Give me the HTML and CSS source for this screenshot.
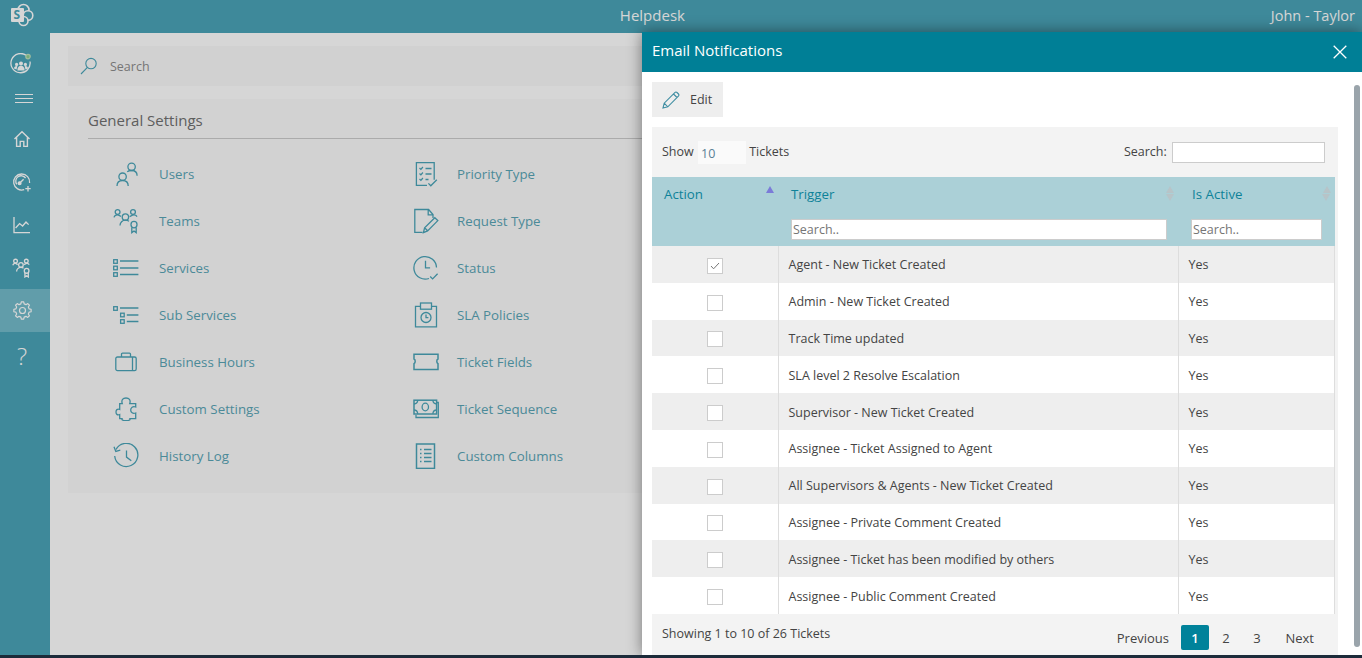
FILE: index.html
```html
<!DOCTYPE html>
<html>
<head>
<title>Helpdesk</title>
<link rel="stylesheet" href="styles.css">
</head>
<body>
  <div id="app">
    <div id="topbar">
      <div class="logo">
        <svg width="24" height="24" viewBox="0 0 24 24">
          <circle cx="13.5" cy="7" r="5.5" fill="none" stroke="#fff" stroke-width="1.6"/>
          <circle cx="18" cy="12.5" r="4.8" fill="#4ba4b8" stroke="#fff" stroke-width="1.6"/>
          <circle cx="13.5" cy="18" r="4.5" fill="#4ba4b8" stroke="#fff" stroke-width="1.6"/>
          <rect x="1" y="5" width="13" height="14" rx="1" fill="#fff"/>
          <text x="3.6" y="16.4" class="logo-letter">S</text>
        </svg>
      </div>
      <div class="app-title">Helpdesk</div>
      <div class="user-name">John - Taylor</div>
    </div>

    <div id="layout">
      <div id="sidebar">
        <div class="nav-item nav-profile">
          <svg width="24" height="24" viewBox="0 0 24 24" fill="none" stroke="#fff" stroke-width="1.3">
            <path d="M17.5 2.6A9.6 9.6 0 1 0 21 8.5"/>
            <circle cx="19" cy="3.6" r="2.2" fill="#8fd08f" stroke="#bde0bd"/>
            <circle cx="12" cy="10.4" r="2" fill="#fff" stroke="none"/>
            <circle cx="7.6" cy="11.4" r="1.6" fill="#fff" stroke="none"/>
            <circle cx="16.4" cy="11.4" r="1.6" fill="#fff" stroke="none"/>
            <path d="M8.4 17.4c0-3 1.4-4.6 3.6-4.6s3.6 1.6 3.6 4.6z" fill="#fff" stroke="none"/>
            <path d="M5 15.6c0-1.6 1-2.6 2.6-2.6l.8.2-.9 3.4zM19 15.6c0-1.6-1-2.6-2.6-2.6l-.8.2.9 3.4z" fill="#fff" stroke="none"/>
          </svg>
        </div>
        <div class="nav-item nav-menu">
          <svg width="18" height="11" viewBox="0 0 18 11" stroke="#fff" stroke-width="1">
            <path d="M0 1.5h18M0 5.5h18M0 9.5h18"/>
          </svg>
        </div>
        <div class="nav-item nav-home">
          <svg width="18" height="18" viewBox="0 0 18 18" fill="none" stroke="#fff" stroke-width="1.4">
            <path d="M1.5 9 9 1.8 16.5 9M3.6 7.4v9h3.6v-5h3.6v5h3.6v-9"/>
          </svg>
        </div>
        <div class="nav-item">
          <svg width="20" height="20" viewBox="0 0 20 20" fill="none" stroke="#fff" stroke-width="1.3">
            <path d="M12.2 17.6A8 8 0 1 1 17.6 11"/>
            <path d="M4.8 12.4A5.4 5.4 0 0 1 13.6 6"/>
            <path d="M6.8 12 11.6 7.2"/>
            <circle cx="7.6" cy="11.2" r="1.4" fill="#fff"/>
            <path d="M16 14v5.4M13.3 16.7h5.4"/>
          </svg>
        </div>
        <div class="nav-item">
          <svg width="18" height="18" viewBox="0 0 18 18" fill="none" stroke="#fff" stroke-width="1.3">
            <path d="M1 1v15.6h16"/>
            <path d="M2.6 12 6.6 7.6 9.6 10 13 6l2.6 2.6"/>
          </svg>
        </div>
        <div class="nav-item">
          <svg width="20" height="20" viewBox="0 0 26 26" fill="none" stroke="#fff" stroke-width="1.7">
            <circle cx="4.6" cy="4" r="2.4"/><circle cx="18.6" cy="4" r="2.4"/><circle cx="11.6" cy="9" r="3"/>
            <path d="M1 9.4c.6-2 2-2.600 4-2.400l2.400 1.600M22.400 8.600c-.6-1.200-2-1.800-3.800-1.600l-3 1.600M6 17.600c0-3 2.400-5.400 5.600-5.400 1.400 0 2.600.4 3.400 1"/>
            <rect x="16" y="13.4" width="6" height="6.4" rx="3"/>
            <path d="M16.8 19.6v5l2.200-1.600 2.200 1.600v-5"/>
          </svg>
        </div>
        <div class="nav-item active">
          <svg width="19" height="19" viewBox="-12 -12 24 24" fill="none" stroke="#fff" stroke-width="1.5" stroke-linejoin="round">
            <circle r="3.8"/>
            <polygon points="8.34,-2.08 10.89,-1.53 10.89,1.53 8.34,2.08 7.37,4.43 8.78,6.62 6.62,8.78 4.43,7.37 2.08,8.34 1.53,10.89 -1.53,10.89 -2.08,8.34 -4.43,7.37 -6.62,8.78 -8.78,6.62 -7.37,4.43 -8.34,2.08 -10.89,1.53 -10.89,-1.53 -8.34,-2.08 -7.37,-4.43 -8.78,-6.62 -6.62,-8.78 -4.43,-7.37 -2.08,-8.34 -1.53,-10.89 1.53,-10.89 2.08,-8.34 4.43,-7.37 6.62,-8.78 8.78,-6.62 7.37,-4.43"/>
          </svg>
        </div>
        <div class="nav-item nav-help">?</div>
      </div>

      <div id="content">
        <div class="search-bar">
          <svg width="18" height="18" viewBox="0 0 18 18" fill="none" stroke="#4ba4b8" stroke-width="1.1">
            <circle cx="11" cy="6.6" r="5.2"/>
            <path d="M7.4 10.4 1 17"/>
          </svg>
          <span>Search</span>
        </div>

        <div class="settings-card">
          <h2>General Settings</h2>
          <div class="settings-grid">
            <a class="setting">
              <svg class="setting-icon" width="24" height="24" viewBox="0 0 24 24">
                <circle cx="17.6" cy="4.8" r="3.7"/><circle cx="8.6" cy="14.7" r="3.7"/>
                <path d="M3 24c0-3.6 2.200-5.500 5.600-5.500s5.600 1.900 5.600 5.500M13.200 9.800c1.200-.9 2.700-1.300 4.400-1.300 3.400 0 5.500 1.900 5.500 5.300"/>
              </svg>
              <span>Users</span>
            </a>
            <a class="setting">
              <svg class="setting-icon" width="26" height="26" viewBox="0 0 26 26">
                <circle cx="4.6" cy="4" r="2.4"/><circle cx="20" cy="4" r="2.4"/><circle cx="12.4" cy="9" r="3.2"/>
                <path d="M1 9.4c.6-2 2-2.600 4-2.400l3 1.400M24 8.600c-.6-1.200-2-1.800-4-1.600l-3.400 1.600M7 17.600c0-3 2.400-5.400 5.400-5.400 1.400 0 2.600.4 3.600 1"/>
                <rect x="18" y="13.4" width="6" height="6.4" rx="3"/>
                <path d="M18.800 19.600v5l2.200-1.600 2.200 1.600v-5"/>
              </svg>
              <span>Teams</span>
            </a>
            <a class="setting">
              <svg class="setting-icon" width="26" height="18" viewBox="0 0 26 18">
                <rect x=".7" y=".7" width="3.6" height="3.6"/><rect x=".7" y="7.2" width="3.6" height="3.6"/><rect x=".7" y="13.7" width="3.6" height="3.6"/>
                <path d="M7 2h18.400M7 9h18.400M7 15.500h18.400" stroke-width="1.5"/>
              </svg>
              <span>Services</span>
            </a>
            <a class="setting">
              <svg class="setting-icon" width="26" height="18" viewBox="0 0 26 18">
                <rect x=".7" y=".7" width="3.6" height="3.6"/><rect x="7.6" y="7.2" width="3.6" height="3.6"/><rect x="7.6" y="13.7" width="3.6" height="3.6"/>
                <path d="M7 2h18.400M13.800 9h11.600M13.800 15.500h11.600" stroke-width="1.5"/>
              </svg>
              <span>Sub Services</span>
            </a>
            <a class="setting">
              <svg class="setting-icon" width="24" height="20" viewBox="0 0 24 20">
                <rect x="1.8" y="5" width="20.4" height="13.6" rx="1.6"/>
                <path d="M7.500 5V2.200c0-.6.400-1 1-1h7c.6 0 1 .4 1 1V5M18.500 5v13.600"/>
              </svg>
              <span>Business Hours</span>
            </a>
            <a class="setting">
              <svg class="setting-icon" width="22" height="24" viewBox="0 0 22 24">
                <path d="M7.300 6.700C6 3 8 1 11 1s5 2 3.700 5.700h6V10c-3-1-5 .5-5 3s2 4 5 3v5.700H15c.5 1.500-1.500 2-4 2s-4.500-.5-4-2H4.700v-4.200c-2.500 1-3.700-.5-3.700-2.500s1.200-3.500 3.700-2.500V6.700z"/>
              </svg>
              <span>Custom Settings</span>
            </a>
            <a class="setting">
              <svg class="setting-icon" width="26" height="26" viewBox="0 0 26 26">
                <path d="M3 6.500A11.600 11.600 0 1 1 1.700 13"/>
                <path d="M1 3.800 2.800 8.400 7.300 7.200M13.500 7.500v6.600l4.800 3.600"/>
              </svg>
              <span>History Log</span>
            </a>
            <a class="setting">
              <svg class="setting-icon" width="24" height="26" viewBox="0 0 24 26">
                <path d="M13 24.400H2.400V1.700h17.800v17"/>
                <path d="M5.500 7l1.400 1.400 2-2.400M5.500 12.500l1.400 1.400 2-2.400M5.500 18l1.400 1.400 2-2.400M11.500 7.500h6M11.500 13h6M11.500 18.500h3M14.400 22.400l2.400 2.400 6-6"/>
              </svg>
              <span>Priority Type</span>
            </a>
            <a class="setting">
              <svg class="setting-icon" width="26" height="26" viewBox="0 0 26 26">
                <path d="M9.600 24.400H1.800V1.500h13.800l4.400 5v3.600M15.200 1.500v5.400h4.800"/>
                <path d="M10.400 24.600l1.200-4.800L21.800 9.700l3 2.900-10.200 10.300zM11.600 19.800l3 3"/>
              </svg>
              <span>Request Type</span>
            </a>
            <a class="setting">
              <svg class="setting-icon" width="26" height="26" viewBox="0 0 26 26">
                <path d="M16 23.500A11.300 11.300 0 1 1 23.500 12.500M12.500 5.800v7h4.600M17.200 21.500l2.400 2.400 5-5.200"/>
              </svg>
              <span>Status</span>
            </a>
            <a class="setting">
              <svg class="setting-icon" width="24" height="26" viewBox="0 0 24 26">
                <path d="M6.500 4.400H1.500v20.500h21V4.400h-5"/>
                <rect x="6.5" y="1" width="11" height="6.2"/>
                <circle cx="12" cy="15.500" r="5"/>
                <path d="M12 12.500v3.200h2.400"/>
              </svg>
              <span>SLA Policies</span>
            </a>
            <a class="setting">
              <svg class="setting-icon" width="26" height="18" viewBox="0 0 26 18">
                <path d="M1 1.200h24v4.800c-1.600.6-1.600 3.900 0 4.700v5.700H1v-5.700c1.600-.8 1.600-4.100 0-4.700z" stroke-width="1.5"/>
              </svg>
              <span>Ticket Fields</span>
            </a>
            <a class="setting">
              <svg class="setting-icon" width="26" height="20" viewBox="0 0 26 20">
                <path d="M24 3.500h1.300v15H3v-2.400"/>
                <rect x="1" y="1.2" width="22.6" height="13.8" stroke-width="1.5"/>
                <ellipse cx="12.3" cy="8" rx="3.2" ry="3.8"/>
                <path d="M1 5c2 0 3.500-1.500 3.800-3.800M23.600 5c-2 0-3.500-1.500-3.800-3.800M1 11c2 0 3.500 1.500 3.800 3.800M23.600 11c-2 0-3.500 1.500-3.800 3.800"/>
              </svg>
              <span>Ticket Sequence</span>
            </a>
            <a class="setting">
              <svg class="setting-icon" width="22" height="26" viewBox="0 0 22 26">
                <rect x="1.5" y="1" width="18" height="24.4" stroke-width="1.5"/>
                <path d="M5 6.500h1.500M9 6.500h7.500M5 10.500h1.500M9 10.500h7.500M5 14.500h1.500M9 14.500h7.500M5 18.500h1.500M9 18.500h7.500"/>
              </svg>
              <span>Custom Columns</span>
            </a>
          </div>
        </div>
      </div>
    </div>

    <div id="scrim"></div>

    <div id="panel">
      <div class="panel-header">
        <span class="panel-title">Email Notifications</span>
        <svg width="14" height="14" viewBox="0 0 14 14" stroke="#fff" stroke-width="1.3"><path d="M.7.7 13.300 13.300M13.300.7.7 13.300"/></svg>
      </div>
      <div class="panel-body">
        <button class="edit-btn">
          <svg width="18" height="18" viewBox="0 0 18 18" fill="none" stroke="#3f8ea2" stroke-width="1.1">
            <path d="M1 17l1.200-4.800L12.800 1.600c.7-.7 1.600-.7 2.200-.1l1.500 1.500c.6.600.6 1.500-.1 2.200L5.800 15.800zM2.200 12.200l3.600 3.600M11.500 3l3.500 3.500"/>
          </svg>
          Edit
        </button>

        <div class="table-wrap">
          <div class="table-tools">
            <div class="show-box">Show <span class="page-size">10</span> Tickets</div>
            <label class="global-search">Search: <input type="text"></label>
          </div>

          <table class="tickets">
            <colgroup>
              <col class="col-action"><col class="col-trigger"><col class="col-active">
            </colgroup>
            <thead>
              <tr>
                <th><div class="th-in">Action<i class="sort sort-up"></i></div></th>
                <th><div class="th-in">Trigger<i class="sort"></i></div><input class="col-filter" type="text" placeholder="Search.."></th>
                <th><div class="th-in">Is Active<i class="sort"></i></div><input class="col-filter" type="text" placeholder="Search.."></th>
              </tr>
            </thead>
            <tbody>
              <tr><td><span class="check checked"><svg width="10" height="8" viewBox="0 0 10 8" fill="none" stroke="#777" stroke-width="1"><path d="M1 4l2.600 2.800L9 1"/></svg></span></td><td>Agent - New Ticket Created</td><td>Yes</td></tr>
              <tr><td><span class="check"></span></td><td>Admin - New Ticket Created</td><td>Yes</td></tr>
              <tr><td><span class="check"></span></td><td>Track Time updated</td><td>Yes</td></tr>
              <tr><td><span class="check"></span></td><td>SLA level 2 Resolve Escalation</td><td>Yes</td></tr>
              <tr><td><span class="check"></span></td><td>Supervisor - New Ticket Created</td><td>Yes</td></tr>
              <tr><td><span class="check"></span></td><td>Assignee - Ticket Assigned to Agent</td><td>Yes</td></tr>
              <tr><td><span class="check"></span></td><td>All Supervisors &amp; Agents - New Ticket Created</td><td>Yes</td></tr>
              <tr><td><span class="check"></span></td><td>Assignee - Private Comment Created</td><td>Yes</td></tr>
              <tr><td><span class="check"></span></td><td>Assignee - Ticket has been modified by others</td><td>Yes</td></tr>
              <tr><td><span class="check"></span></td><td>Assignee - Public Comment Created</td><td>Yes</td></tr>
            </tbody>
          </table>

          <div class="table-foot">
            <div class="table-info">Showing 1 to 10 of 26 Tickets</div>
            <div class="pager">
              <a class="page-prev">Previous</a>
              <a class="page current">1</a>
              <a class="page">2</a>
              <a class="page">3</a>
              <a class="page-next">Next</a>
            </div>
          </div>
        </div>
        <div class="scroll-thumb"></div>
      </div>
    </div>
  </div>
  <div id="taskbar"></div>
</body>
</html>
```
FILE: styles.css
```css
* {
  box-sizing: border-box;
}

html,
body {
  margin: 0;
  padding: 0;
  height: 658px;
  overflow: hidden;
}

body {
  font-family: "Open Sans", "Noto Sans", sans-serif;
  font-size: 12.5px;
  color: #444;
  background-color: #fff;
}

#app {
  position: relative;
  height: 655px;
  overflow: hidden;
}

#taskbar {
  height: 3px;
  background-color: #1c2b3a;
}

/* top bar */
#topbar {
  display: flex;
  align-items: center;
  height: 33px;
  padding-bottom: 3px;
  background-color: #4ba4b8;
  color: #fff;
}

.logo {
  width: 50px;
  padding-left: 10px;
  height: 30px;
  flex: none;
}

.logo svg {
  display: block;
  margin-top: 3px;
}

.logo-letter {
  font-family: "Open Sans", sans-serif;
  font-size: 12px;
  font-weight: 700;
  fill: #4ba4b8;
}

.app-title {
  flex: 1;
  text-align: center;
  padding-right: 16px;
  font-size: 15px;
}

.user-name {
  font-size: 14.5px;
  padding-right: 7px;
}

/* sidebar */
#layout {
  display: flex;
  height: 622px;
}

#sidebar {
  width: 50px;
  flex: none;
  background-color: #4ba4b8;
  padding-top: 8px;
}

.nav-item {
  display: flex;
  align-items: center;
  justify-content: center;
  height: 43px;
  padding-right: 6px;
}

.nav-profile {
  height: 44px;
  padding-top: 4px;
  padding-right: 8px;
}

.nav-menu {
  height: 26px;
  padding-right: 2px;
}

.nav-home {
  margin-top: 6px;
}

.nav-item.active {
  background-color: #74bccb;
  padding-right: 5px;
}

.nav-help {
  height: 46px;
  color: #fff;
  font-size: 24px;
  font-weight: 300;
  padding-right: 6px;
}

/* settings */
#content {
  flex: 1;
  padding: 13px 0 0 18px;
  background-color: #fff;
}

.search-bar {
  display: flex;
  align-items: center;
  gap: 12px;
  height: 40px;
  padding-left: 12px;
  margin-bottom: 13px;
  background-color: #fafafa;
  color: #8c8c8c;
  font-size: 12.5px;
}

.settings-card {
  height: 394px;
  padding: 10px 20px;
  background-color: #fbfbfb;
}

.settings-card h2 {
  margin: 0;
  height: 30px;
  border-bottom: 1px solid #ccc;
  color: #707070;
  font-size: 15px;
  font-weight: 400;
  line-height: 22px;
}

.settings-grid {
  display: grid;
  grid-template-rows: repeat(7, 47px);
  grid-template-columns: 298px 298px 298px;
  grid-auto-flow: column;
  padding-top: 11px;
}

.setting {
  display: grid;
  grid-template-columns: 48px 1fr;
  column-gap: 9px;
  align-items: center;
  padding-left: 14px;
  color: #5aa5b6;
  font-size: 13.3px;
}

.setting:nth-child(n+8) {
  column-gap: 7px;
  padding-left: 16px;
}

.setting-icon {
  justify-self: center;
  fill: none;
  stroke: #4ba4b8;
  stroke-width: 1.3;
}

/* overlay */
#scrim {
  position: absolute;
  top: 0;
  left: 0;
  right: 0;
  bottom: 0;
  background-color: rgba(0, 0, 0, 0.16);
}

#panel {
  position: absolute;
  top: 32px;
  left: 642px;
  right: 0;
  bottom: 0;
  background-color: #fff;
  box-shadow: 0 0 14px rgba(0, 0, 0, 0.45);
}

.panel-header {
  display: flex;
  align-items: center;
  justify-content: space-between;
  height: 40px;
  padding: 0 15px 0 10px;
  background-color: #007f96;
  color: #fff;
}

.panel-title {
  margin-top: -4px;
  font-size: 15px;
  font-weight: 500;
}

.panel-body {
  position: relative;
  padding: 10px 24px 0 10px;
}

.edit-btn {
  display: flex;
  align-items: center;
  gap: 10px;
  width: 71px;
  height: 35px;
  margin-bottom: 10px;
  padding: 0 0 0 10px;
  border: none;
  background-color: #eee;
  color: #444;
  font-family: inherit;
  font-size: 12.5px;
}

.scroll-thumb {
  position: absolute;
  top: 13px;
  right: 2px;
  width: 6px;
  height: 562px;
  border-radius: 3px;
  background-color: #9aa4ab;
}

.table-wrap {
  width: 686px;
  background-color: #f3f3f3;
}

.table-tools {
  display: flex;
  align-items: center;
  justify-content: space-between;
  height: 50px;
  padding: 0 13px 0 10px;
}

.page-size {
  display: inline-block;
  width: 48px;
  height: 23px;
  margin-left: 1px;
  padding-left: 3px;
  line-height: 25px;
  vertical-align: middle;
  background-color: #fafafa;
  color: #5a7f95;
}

.global-search input {
  width: 153px;
  height: 21px;
  margin-left: 2px;
  border: 1px solid #ccc;
  background-color: #fff;
  vertical-align: middle;
}

/* table */
.tickets {
  width: 683px;
  border-collapse: collapse;
  table-layout: fixed;
}

.col-action {
  width: 126px;
}

.col-trigger {
  width: 400px;
}

.tickets th {
  height: 69px;
  padding: 0 0 6px 13px;
  background-color: #abd0d7;
  color: #0e8299;
  font-size: 13.3px;
  font-weight: 400;
  text-align: left;
  vertical-align: top;
}

.tickets th:first-child {
  padding-left: 12px;
}

.tickets th:last-child {
  padding-left: 14px;
}

.th-in {
  position: relative;
  height: 35px;
  padding-top: 7px;
  line-height: 20px;
}

.sort {
  position: absolute;
  top: 9px;
  right: 4px;
  width: 0;
  height: 0;
  border-left: 4.5px solid transparent;
  border-right: 4.5px solid transparent;
  border-bottom: 7px solid #b7c4c8;
}

.sort::after {
  content: "";
  position: absolute;
  top: 8px;
  left: -4.5px;
  border-left: 4.5px solid transparent;
  border-right: 4.5px solid transparent;
  border-top: 7px solid #b7c4c8;
}

.sort-up {
  border-bottom-color: #7b7bd8;
}

.sort-up::after {
  display: none;
}

.col-filter {
  display: block;
  width: calc(100% - 11px);
  height: 21px;
  margin-top: 7px;
  padding: 0 1px;
  border: 1px solid #ccc;
  background-color: #fff;
  font-family: inherit;
  font-size: 12.5px;
}

.tickets th:last-child .col-filter {
  width: calc(100% - 12px);
  margin-left: -1px;
}

.tickets td {
  height: 36.8px;
  padding: 1px 0 0 10px;
  border-left: 1px solid #ddd;
  border-right: 1px solid #ddd;
}

.tickets td:first-child {
  border-left: none;
  padding: 1px 0 0;
  text-align: center;
}

.tickets tbody tr:nth-child(odd) td {
  background-color: #eee;
}

.tickets tbody tr:nth-child(even) td {
  background-color: #fff;
}

.check {
  display: inline-flex;
  align-items: center;
  justify-content: center;
  width: 16px;
  height: 16px;
  vertical-align: middle;
  border: 1px solid #ccc;
  background-color: #fff;
}

/* footer */
.table-foot {
  display: flex;
  justify-content: space-between;
  height: 41px;
  padding: 0 0 0 10px;
}

.table-info {
  padding-top: 11px;
}

.pager {
  display: flex;
  align-items: center;
  height: 25px;
  margin-top: 11px;
  margin-right: 24px;
  font-size: 13px;
}

.page-prev {
  margin-right: 10.5px;
  padding-top: 1px;
}

.page-next {
  margin-left: 13px;
  padding-top: 1px;
}

.page {
  width: 28px;
  height: 25px;
  margin: 0 1.5px;
  line-height: 26px;
  text-align: center;
}

.page.current {
  border-radius: 2px;
  background-color: #00829a;
  color: #fff;
  font-weight: 600;
}
```
